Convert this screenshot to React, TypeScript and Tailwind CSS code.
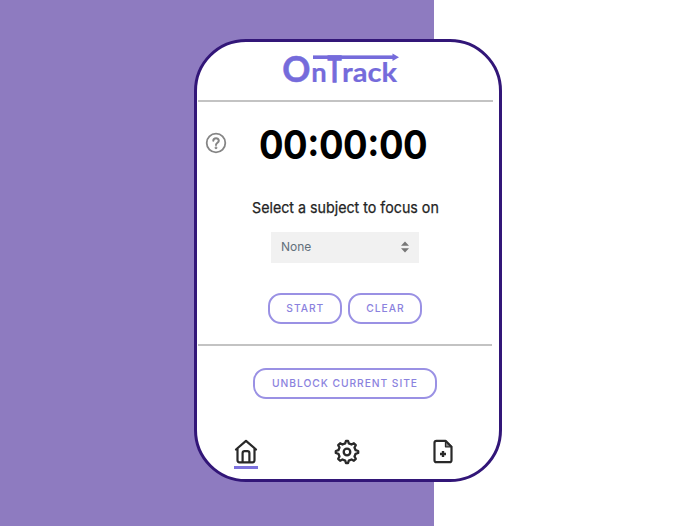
import React from "react";

function Logo() {
  return (
    <svg width="130" height="56" viewBox="275 42 130 56" fill="#756bdb" stroke="#756bdb" fontFamily="Lato, sans-serif" fontWeight="700">
      <text x="282.2" y="82.3" fontSize="36" strokeWidth=".5" textLength="28.2" lengthAdjust="spacingAndGlyphs">O</text>
      <text x="311.2" y="82.3" fontSize="27.5" strokeWidth=".2" textLength="15.5" lengthAdjust="spacingAndGlyphs">n</text>
      <text x="327.5" y="82" fontSize="35.5" strokeWidth="1.3" textLength="14" lengthAdjust="spacingAndGlyphs">T</text>
      <text x="342" y="82.3" fontSize="26.5" strokeWidth=".2" textLength="55" lengthAdjust="spacingAndGlyphs">rack</text>
      <rect x="313" y="55.4" width="81" height="3.6" stroke="none" />
      <path d="M392.5 53.4L399 57.2L392.5 61Z" stroke="none" />
    </svg>
  );
}

function HelpIcon() {
  return (
    <svg width="22" height="22" viewBox="0 0 22 22" fill="none" stroke="#858585" strokeWidth="1.8" strokeLinecap="round">
      <circle cx="11" cy="11" r="9.3" />
      <path d="M8.3 8.8C8.3 5.3 13.8 5.4 13.8 8.7C13.8 10.8 11 10.8 11 13" strokeWidth="2" />
      <circle cx="11" cy="15.8" r=".5" />
    </svg>
  );
}

function HomeIcon() {
  return (
    <svg width="24" height="25" viewBox="0 0 24 25" fill="none" stroke="#292929" strokeWidth="2.2" strokeLinejoin="round" strokeLinecap="round">
      <path d="M2 10.5L12 1.8L22 10.5M3.5 9.5V21.3Q3.5 23.3 5.5 23.3H18.5Q20.5 23.3 20.5 21.3V9.5" />
      <path d="M8.6 23V14.2Q8.6 12.2 10.6 12.2H13.4Q15.4 12.2 15.4 14.2V23" />
    </svg>
  );
}

function GearIcon() {
  return (
    <svg width="26" height="26" viewBox="0 0 26 26" fill="none" stroke="#292929" strokeWidth="2.3" strokeLinejoin="round">
      <path d="M11.2 4.4L12 1.8H14L14.8 4.4L17.5 5.5L19.9 4.2L21.8 6.1L20.5 8.5L21.6 11.2L24.2 12V14L21.6 14.8L20.5 17.5L21.8 19.9L19.9 21.8L17.5 20.5L14.8 21.6L14 24.2H12L11.2 21.6L8.5 20.5L6.1 21.8L4.2 19.9L5.5 17.5L4.4 14.8L1.8 14V12L4.4 11.2L5.5 8.5L4.2 6.1L6.1 4.2L8.5 5.5Z" />
      <circle cx="13" cy="13" r="3.3" />
    </svg>
  );
}

function FileIcon() {
  return (
    <svg width="20" height="25" viewBox="0 0 20 25" fill="none" stroke="#292929" strokeWidth="2.2" strokeLinejoin="round">
      <path d="M12.5 1.8H3.5Q1.5 1.8 1.5 3.8V21.2Q1.5 23.2 3.5 23.2H16.5Q18.5 23.2 18.5 21.2V7.8Z" />
      <path d="M12.5 2V7.8H18.5Z" fill="#292929" fillOpacity=".55" strokeWidth="1.3" />
      <path d="M10 12V18M7 15H13" strokeWidth="2.4" />
    </svg>
  );
}

function OutlineButton({ children, className }: { children: string; className: string }) {
  return (
    <button
      className={`box-border flex h-[31px] items-center justify-center rounded-[13px] border-2 border-[#9a91e4] text-[11px] leading-none font-medium whitespace-nowrap text-[#8b82de] ${className}`}
    >
      <span className="inline-block scale-x-[0.935] tracking-[1px]">{children}</span>
    </button>
  );
}

export default function App() {
  return (
    <div className="flex h-[526px] w-[700px] items-start overflow-hidden bg-[linear-gradient(to_right,#8e7bc0_434px,#ffffff_434px)] pt-[39px] pl-[194px] font-['Inter','Liberation_Sans',sans-serif]">
      <main className="flex h-[443px] w-[308px] flex-col overflow-hidden rounded-[52px] border-[3px] border-[#321678] bg-white">
        <header className="flex h-[58px] shrink-0 pl-[78px]">
          <Logo />
        </header>
        <hr className="ml-px h-[2px] w-[295px] shrink-0 border-0 bg-[#c3c3c3]" />
        <section className="flex h-[242px] shrink-0 flex-col">
          <div className="flex h-[84px] items-center pl-[8px]">
            <div className="pb-[2px]"><HelpIcon /></div>
            <time className="ml-[32px] inline-block origin-left scale-x-[0.935] text-[39px] leading-none font-bold tracking-[-0.5px] whitespace-nowrap text-black">
              00<span className="inline-block -translate-y-[3px]">:</span>00<span className="inline-block -translate-y-[3px]">:</span>00
            </time>
          </div>
          <p className="flex h-[42px] items-center pl-[55px] text-[15px] leading-none whitespace-nowrap text-[#242424]">
            <span className="inline-block origin-left scale-x-[0.95] [-webkit-text-stroke:0.25px_#242424]">Select a subject to focus on</span>
          </p>
          <button className="mt-[4px] ml-[74px] flex h-[31px] w-[148px] items-center justify-between bg-[#f1f1f1] pr-[10px] pb-[2px] pl-[10px] text-[12px] leading-none text-[#62707b]">
            None
            <svg width="8" height="12" viewBox="0 0 8 12" fill="#777777">
              <path d="M0 4.7L4 .5L8 4.7ZM0 7.3L4 11.5L8 7.3Z" />
            </svg>
          </button>
          <div className="mt-[30px] ml-[71px] flex gap-[6px]">
            <OutlineButton className="w-[74px]">START</OutlineButton>
            <OutlineButton className="w-[74px]">CLEAR</OutlineButton>
          </div>
        </section>
        <hr className="ml-px h-[2px] w-[294px] shrink-0 border-0 bg-[#c3c3c3]" />
        <section className="flex h-[93px] shrink-0 pt-[22px] pl-[56px]">
          <OutlineButton className="w-[184px]">UNBLOCK CURRENT SITE</OutlineButton>
        </section>
        <nav className="flex items-start pl-[37px]">
          <div className="flex flex-col items-center border-b-[3px] border-[#7d72de] pb-[2px]">
            <HomeIcon />
          </div>
          <div className="ml-[76px]"><GearIcon /></div>
          <div className="ml-[73px]"><FileIcon /></div>
        </nav>
      </main>
    </div>
  );
}
